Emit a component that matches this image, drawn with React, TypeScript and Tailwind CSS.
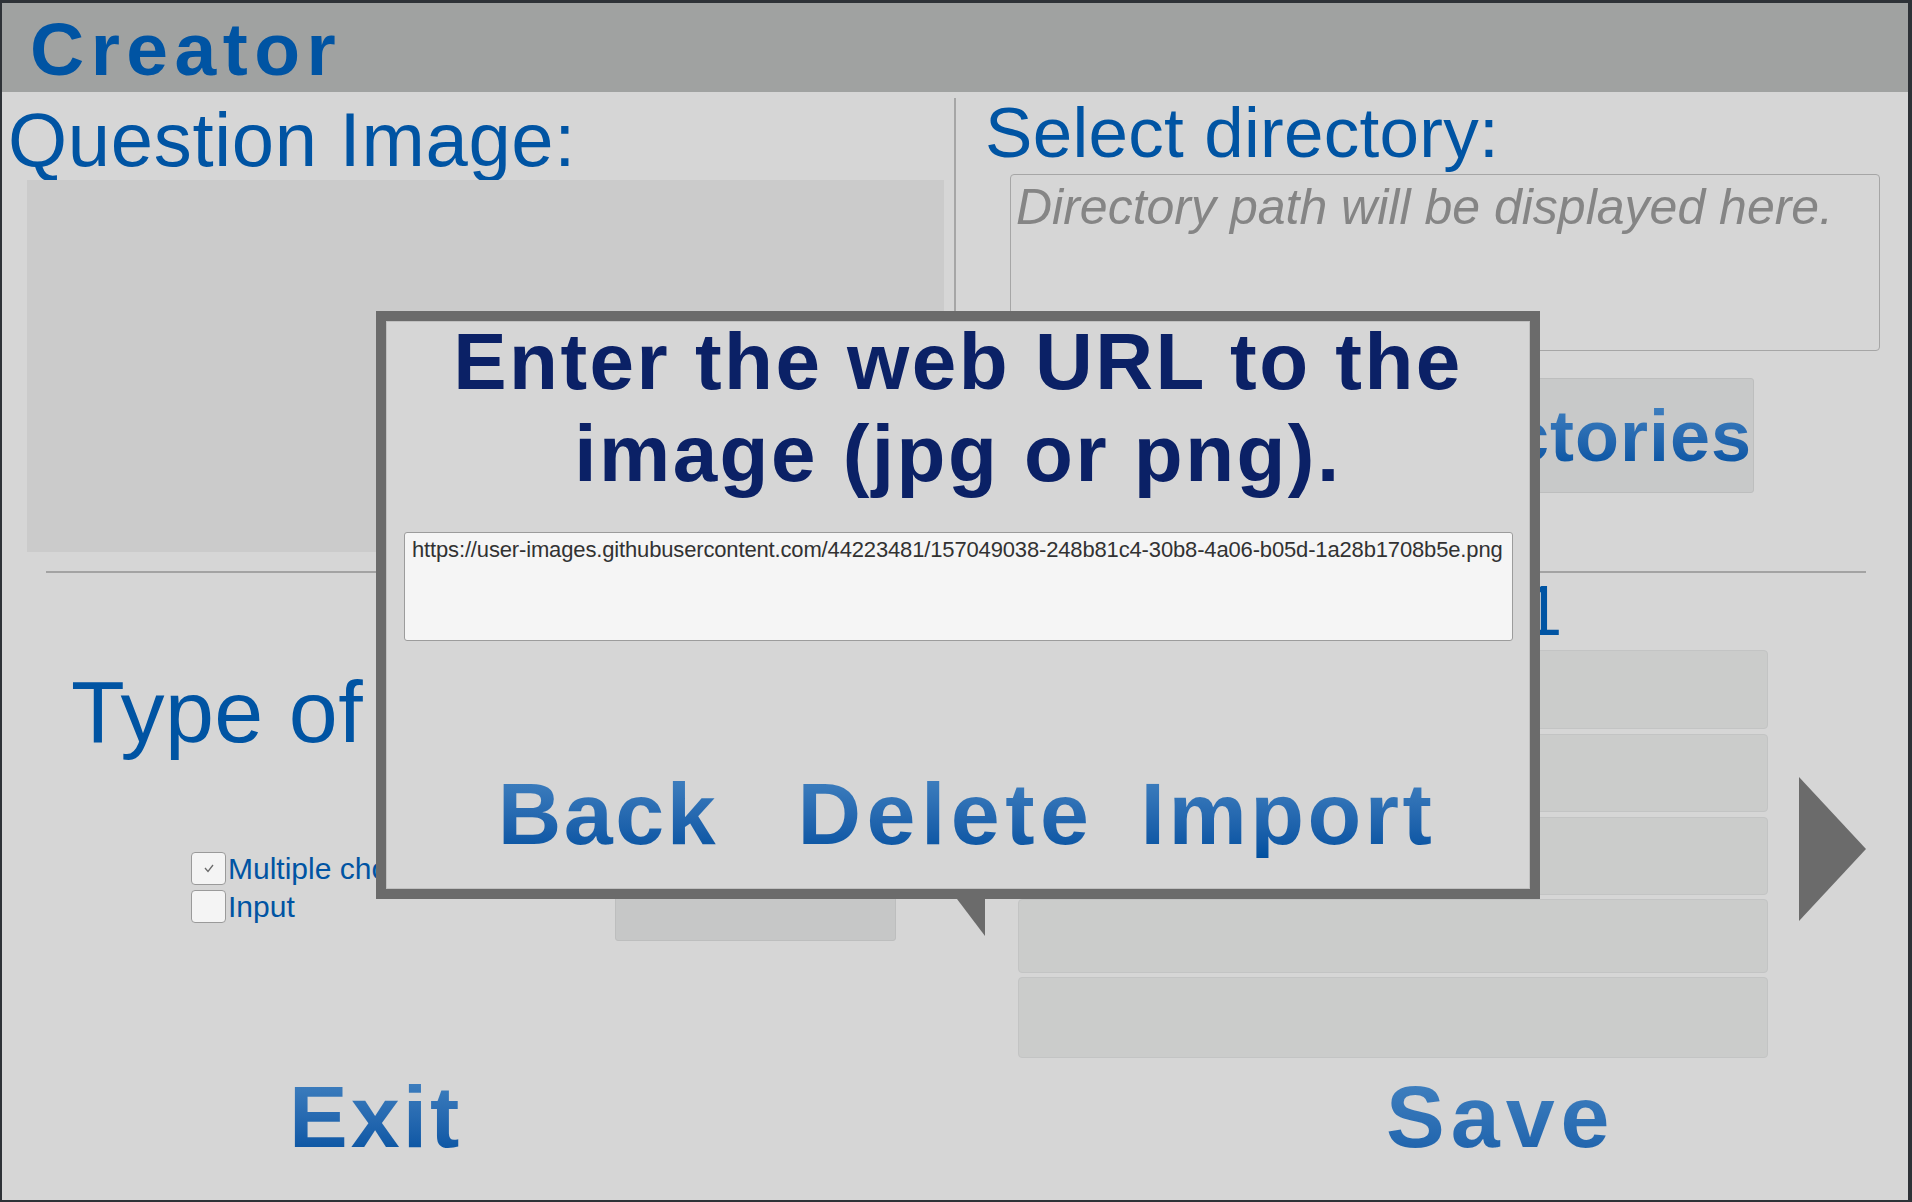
import React from "react";

const grad = "bg-linear-to-b from-[#4383c1] to-[#0050a0] bg-clip-text text-transparent";

function CheckRow({ label, checked, className = "" }: { label: string; checked?: boolean; className?: string }) {
  return (
    <div className={"flex items-center " + className}>
      <div className="flex h-[33px] w-[35px] shrink-0 items-center justify-center rounded-[4px] border border-[#9a9a9a] bg-[#f4f4f4]">
        {checked && (
          <svg width="10" height="9" viewBox="0 0 10 9">
            <polyline points="1,4 4,7.5 9,1" fill="none" stroke="#6a6a6a" strokeWidth="1.3" />
          </svg>
        )}
      </div>
      <span className="ml-[2px] whitespace-nowrap text-[30px] leading-none text-[#0054a3]">{label}</span>
    </div>
  );
}

export default function App() {
  const boxes = [
    { h: "h-[79px]", m: "" },
    { h: "h-[78px]", m: "mt-[5px]" },
    { h: "h-[78px]", m: "mt-[5px]" },
    { h: "h-[74px]", m: "mt-[4px]" },
    { h: "h-[81px]", m: "mt-[4px]" },
  ];
  return (
    <div className="relative h-[1202px] w-[1912px] overflow-hidden bg-[#2e3237] pb-[2px] pl-[2px] pr-[4px] pt-[3px] font-['Liberation_Sans',Arial,sans-serif]">
      <div className="flex h-full flex-col bg-[#d6d6d6]">
        {/* Header */}
        <div className="h-[89px] shrink-0 bg-[#a0a2a1] pl-[28px] pt-[8.5px]">
          <div className="text-[75px] font-bold leading-none tracking-[6.5px] text-[#0054a3]">Creator</div>
        </div>

        {/* Top section */}
        <div className="flex h-[479px] shrink-0">
          <div className="flex w-[952px] shrink-0 flex-col">
            <div className="ml-[6px] mt-[10px] text-[76px] leading-none tracking-[0.7px] text-[#0054a3]">Question Image:</div>
            <div className="ml-[25px] mt-[2px] h-[372px] w-[917px] bg-[#cbcbcb]" />
          </div>
          <div className="mt-[6px] h-[460px] w-[2px] shrink-0 bg-[#a6a6a6]" />
          <div className="flex flex-1 flex-col">
            <div className="ml-[29px] mt-[5px] text-[71px] leading-none tracking-[0.3px] text-[#0054a3]">Select directory:</div>
            <div className="ml-[54px] mt-[6px] h-[177px] w-[870px] rounded-[4px] border border-[#a6a6a6] pl-[5px] pt-[7px]">
              <div className="text-[50px] italic leading-none text-[#858585]">Directory path will be displayed here.</div>
            </div>
            <div className="ml-[54px] mt-[27px] flex h-[115px] w-[744px] items-center justify-end rounded-[3px] border border-[#bdbebe] bg-[#c8c9c9] pr-[1px]">
              <span className={"whitespace-nowrap text-[72px] font-bold leading-none tracking-[1px] " + grad}>Select directories</span>
            </div>
          </div>
        </div>

        {/* Horizontal rule */}
        <div className="ml-[44px] h-[2px] w-[1820px] shrink-0 bg-[#a3a3a3]" />

        {/* Middle section */}
        <div className="flex h-[487px] shrink-0">
          <div className="flex w-[952px] shrink-0 flex-col">
            <div className="ml-[69px] mt-[94.5px] whitespace-nowrap text-[88px] leading-none tracking-[0.5px] text-[#0054a3]">Type of question:</div>
            <div className="mt-[96.5px] flex">
              <div className="ml-[189px] flex w-[424px] shrink-0 flex-col">
                <CheckRow label="Multiple choice" checked />
                <CheckRow label="Input" className="mt-[5px]" />
              </div>
              <div className="mt-[8px] h-[81px] w-[281px] rounded-[3px] border border-[#bdbebe] bg-[#c6c7c7]" />
            </div>
          </div>
          <div className="flex flex-1 flex-col">
            <div className="ml-[64px] mt-[3px] w-[750px] text-center text-[70px] leading-none text-[#0054a3]">Question 1</div>
            <div className="mt-[4px] flex">
              <div className="ml-[64px] flex w-[750px] shrink-0 flex-col">
                {boxes.map((b, i) => (
                  <div key={i} className={"rounded-[4px] border border-[#c3c4c4] bg-[#cbcccb] " + b.h + " " + b.m} />
                ))}
              </div>
              <svg className="ml-[31px] mt-[127px]" width="67" height="144" viewBox="0 0 67 144">
                <polygon points="0,0 67,72 0,144" fill="#6b6b6b" />
              </svg>
            </div>
          </div>
        </div>

        {/* Bottom row */}
        <div className="flex flex-1 pt-[12.5px]">
          <div className="w-[1384px] shrink-0 pl-[287px]">
            <span className={"inline-block text-[88px] font-bold leading-none tracking-[3px] " + grad}>Exit</span>
          </div>
          <span className={"inline-block text-[88px] font-bold leading-none tracking-[6px] " + grad}>Save</span>
        </div>
      </div>

      {/* Dialog */}
      <div className="absolute left-[376px] top-[311px] flex h-[588px] w-[1164px] flex-col items-center border-[10px] border-[#6b6b6b] bg-[#d6d6d6] shadow-[inset_0_0_0_1px_#c0c0c0]">
        <div className="-mt-[5px] text-center text-[80px] font-bold leading-[92px] tracking-[2.5px] text-[#0b2166]">
          Enter the web URL to the
          <br />
          image (jpg or png).
        </div>
        <div className="ml-[18px] mt-[32px] h-[109px] w-[1109px] self-start rounded-[3px] border border-[#9c9c9c] bg-[#f5f5f5] pl-[7px] pt-[5.5px]">
          <div className="whitespace-nowrap text-[22px] leading-none tracking-[-0.15px] text-[#323232]">
            https://user-images.githubusercontent.com/44223481/157049038-248b81c4-30b8-4a06-b05d-1a28b1708b5e.png
          </div>
        </div>
        <div className="mt-[128.5px] flex pr-[20px]">
          <div className="w-[340px] text-center">
            <span className={"inline-block text-[88px] font-bold leading-none tracking-[2.5px] " + grad}>Back</span>
          </div>
          <div className="w-[340px] text-center">
            <span className={"-ml-[4px] inline-block text-[88px] font-bold leading-none tracking-[5.5px] " + grad}>Delete</span>
          </div>
          <div className="w-[340px] text-center">
            <span className={"inline-block text-[88px] font-bold leading-none tracking-[3.5px] " + grad}>Import</span>
          </div>
        </div>
      </div>
      <svg className="absolute left-[957px] top-[899px]" width="28" height="37" viewBox="0 0 28 37">
        <polygon points="0,0 28,0 28,37" fill="#6b6b6b" />
      </svg>
    </div>
  );
}
